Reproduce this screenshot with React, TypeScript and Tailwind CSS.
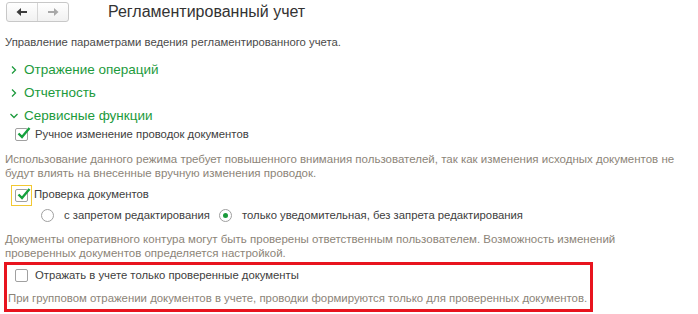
import React from 'react';

const font = { fontFamily: '"Liberation Sans", Arial, sans-serif' };

const Check = ({ checked }: { checked: boolean }) => (
  <span className="relative inline-block w-[13px] h-[13px] border border-[#a0a0a0] rounded-[2px] bg-white shrink-0">
    {checked && (
      <svg className="absolute left-[1px] top-[-3px]" width="14" height="14" viewBox="0 0 14 14">
        <path d="M1.5 7.5 L5 11 L12.5 2" fill="none" stroke="#14a03c" strokeWidth="2.4" />
      </svg>
    )}
  </span>
);

const Radio = ({ on }: { on: boolean }) => (
  <span className="flex items-center justify-center w-[13px] h-[13px] rounded-full border border-[#a0a0a0] bg-white shrink-0">
    {on && <span className="w-[5px] h-[5px] rounded-full bg-[#1a9a3a]" />}
  </span>
);

const Chevron = ({ open }: { open: boolean }) => (
  <svg width="10" height="10" viewBox="0 0 10 10" className="shrink-0">
    {open ? (
      <path d="M1.5 3 L5 6.5 L8.5 3" fill="none" stroke="#1c9a3c" strokeWidth="1.3" />
    ) : (
      <path d="M3 1.5 L6.5 5 L3 8.5" fill="none" stroke="#1c9a3c" strokeWidth="1.3" />
    )}
  </svg>
);

const Section = ({ title, open }: { title: string; open: boolean }) => (
  <div className="flex items-center gap-[5px] pl-[9px] h-[23px] text-[13.5px] leading-[16px] text-[#1c9a3c]">
    <Chevron open={open} />
    <span>{title}</span>
  </div>
);

export default function App() {
  return (
    <div className="w-[698px] h-[314px] bg-white overflow-hidden text-[11.3px] leading-[14px] text-[#404040]" style={font}>
      {/* header */}
      <div className="flex items-center h-[22px] pt-[1px]">
        <div className="flex ml-[6px] h-[20px] w-[63px] border border-[#c8c8c8] rounded-[3px] bg-gradient-to-b from-white to-[#f1f1f1]">
          <div className="flex-1 flex items-center justify-center border-r border-[#d6d6d6]">
            <svg width="12" height="10" viewBox="0 0 12 10">
              <path d="M11 5 H3" stroke="#3c3c3c" strokeWidth="2" />
              <path d="M0.5 5 L5 1 V9 Z" fill="#3c3c3c" />
            </svg>
          </div>
          <div className="flex-1 flex items-center justify-center">
            <svg width="12" height="10" viewBox="0 0 12 10">
              <path d="M1 5 H9" stroke="#a8a8a8" strokeWidth="2" />
              <path d="M11.5 5 L7 1 V9 Z" fill="#a8a8a8" />
            </svg>
          </div>
        </div>
        <div className="ml-[39px] text-[16px] leading-[20px] text-[#333]">Регламентированный учет</div>
      </div>

      <div className="pl-[5px] mt-[13px] text-[11.3px] text-[#4a4a4a]">
        Управление параметрами ведения регламентированного учета.
      </div>

      <div className="mt-[9px]">
        <Section title="Отражение операций" open={false} />
        <Section title="Отчетность" open={false} />
        <Section title="Сервисные функции" open={true} />
      </div>

      <div className="flex items-center gap-[7px] pl-[15px] h-[14px]">
        <Check checked />
        <span>Ручное изменение проводок документов</span>
      </div>

      <div className="pl-[5px] pr-[10px] mt-[11px] text-[11.5px] text-[#8c8478]">
        Использование данного режима требует повышенного внимания пользователей, так как изменения исходных документов не будут влиять на внесенные вручную изменения проводок.
      </div>

      <div className="flex items-center gap-[2px] pl-[11px] mt-[5px] h-[21px]">
        <span className="flex items-center justify-center w-[21px] h-[21px] border border-[#f2c832]">
          <Check checked />
        </span>
        <span className="-mt-[3px]">Проверка документов</span>
      </div>

      <div className="flex items-center pl-[41px] mt-[1px] h-[16px]">
        <Radio on={false} />
        <span className="ml-[10px] w-[155px]">с запретом редактирования</span>
        <Radio on />
        <span className="ml-[10px]">только уведомительная, без запрета редактирования</span>
      </div>

      <div className="pl-[5px] pr-[10px] mt-[9px] text-[11.5px] text-[#8c8478]">
        Документы оперативного контура могут быть проверены ответственным пользователем. Возможность изменений проверенных документов определяется настройкой.
      </div>

      <div className="ml-[4px] mt-[2px] w-[589px] h-[50px] border-[3px] border-[#e8141e]">
        <div className="flex items-center gap-[7px] pl-[8px] mt-[3px] h-[14px]">
          <Check checked={false} />
          <span>Отражать в учете только проверенные документы</span>
        </div>
        <div className="pl-[1px] mt-[9px] whitespace-nowrap text-[11.4px] text-[#8c8478]">
          При групповом отражении документов в учете, проводки формируются только для проверенных документов.
        </div>
      </div>
    </div>
  );
}
